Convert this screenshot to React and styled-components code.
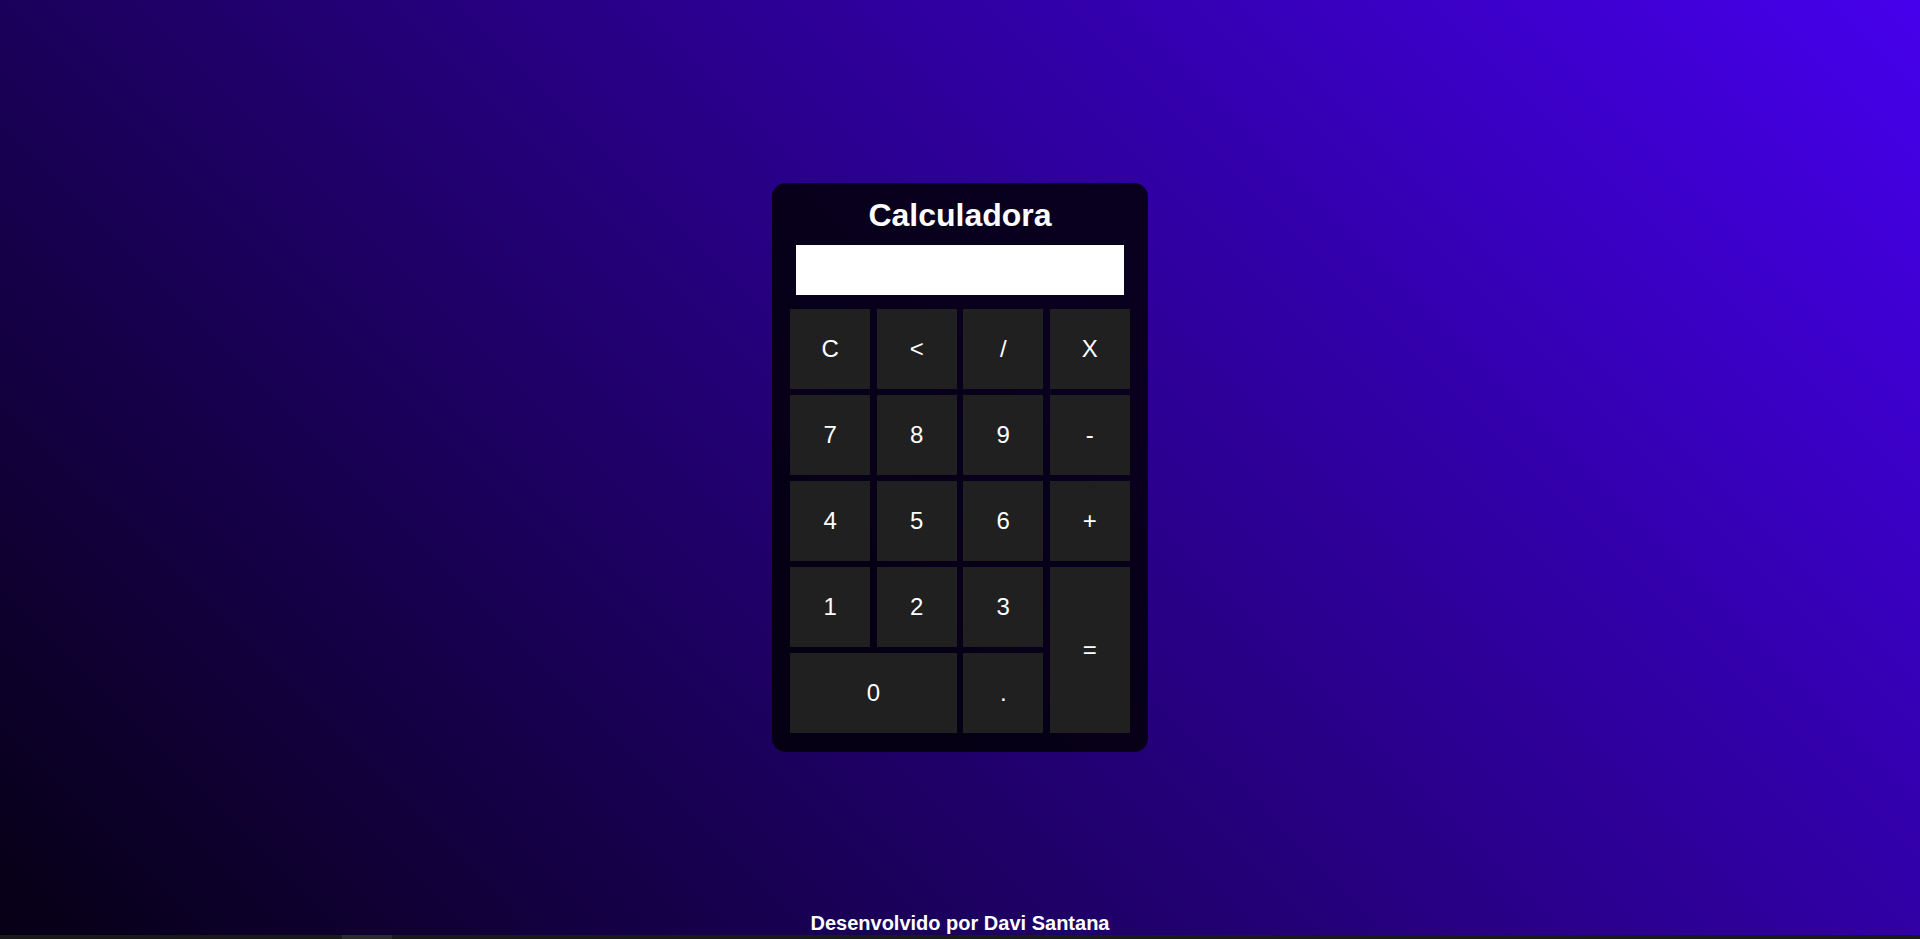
import React from "react";
import styled, { createGlobalStyle } from "styled-components";

const Global = createGlobalStyle`
  html, body { margin: 0; padding: 0; }
  body {
    font-family: "Liberation Sans", Arial, sans-serif;
    background: #111;
    overflow: hidden;
  }
`;

const Page = styled.div`
  height: 939px;
  display: flex;
  flex-direction: column;
`;

const Stage = styled.div`
  height: 935px;
  display: grid;
  grid-template-areas: "stack";
  justify-items: center;
  background: linear-gradient(45deg, #060014 0%, #4600ec 100%);
`;

const Card = styled.div`
  grid-area: stack;
  align-self: center;
  width: 376px;
  box-sizing: border-box;
  padding: 14px 18px 19px 18px;
  border-radius: 14px;
  background: rgba(0, 0, 0, 0.8);
  display: flex;
  flex-direction: column;
`;

const Title = styled.h1`
  margin: 0 0 11px 0;
  font-size: 32px;
  line-height: 37px;
  font-weight: bold;
  color: #fff;
  text-align: center;
`;

const Display = styled.input`
  height: 50px;
  margin: 0 6px 14px 6px;
  border: none;
  outline: none;
  padding: 0 8px;
  background: #fff;
  font-family: "Liberation Sans", Arial, sans-serif;
  font-size: 24px;
  text-align: right;
  box-sizing: border-box;
`;

const Keys = styled.div`
  display: grid;
  grid-template-columns: repeat(4, 1fr);
  grid-auto-rows: 80px;
  gap: 6px 6.3px;
`;

const Key = styled.button`
  border: none;
  background: #202020;
  color: #fff;
  font-family: "Liberation Sans", Arial, sans-serif;
  font-size: 24px;
  padding: 0;
  cursor: pointer;
  grid-column: span ${(p) => p.$cols || 1};
  grid-row: span ${(p) => p.$rows || 1};
`;

const Footer = styled.footer`
  grid-area: stack;
  align-self: end;
  color: #fff;
  font-weight: bold;
  font-size: 20px;
  line-height: 23px;
  text-align: center;
`;

const ScrollTrack = styled.div`
  height: 4px;
  background: #1a1a1a;
  display: flex;
`;

const ScrollThumb = styled.div`
  margin-left: 342px;
  width: 50px;
  background: #2c2c2c;
`;

const keys = [
  { k: "C" }, { k: "<" }, { k: "/" }, { k: "X" },
  { k: "7" }, { k: "8" }, { k: "9" }, { k: "-" },
  { k: "4" }, { k: "5" }, { k: "6" }, { k: "+" },
  { k: "1" }, { k: "2" }, { k: "3" }, { k: "=", rows: 2 },
  { k: "0", cols: 2 }, { k: "." },
];

export default function App() {
  return (
    <Page>
      <Global />
      <Stage>
        <Card>
          <Title>Calculadora</Title>
          <Display type="text" readOnly value="" />
          <Keys>
            {keys.map((b) => (
              <Key key={b.k} $cols={b.cols} $rows={b.rows}>
                {b.k}
              </Key>
            ))}
          </Keys>
        </Card>
        <Footer>Desenvolvido por Davi Santana</Footer>
      </Stage>
      <ScrollTrack>
        <ScrollThumb />
      </ScrollTrack>
    </Page>
  );
}
